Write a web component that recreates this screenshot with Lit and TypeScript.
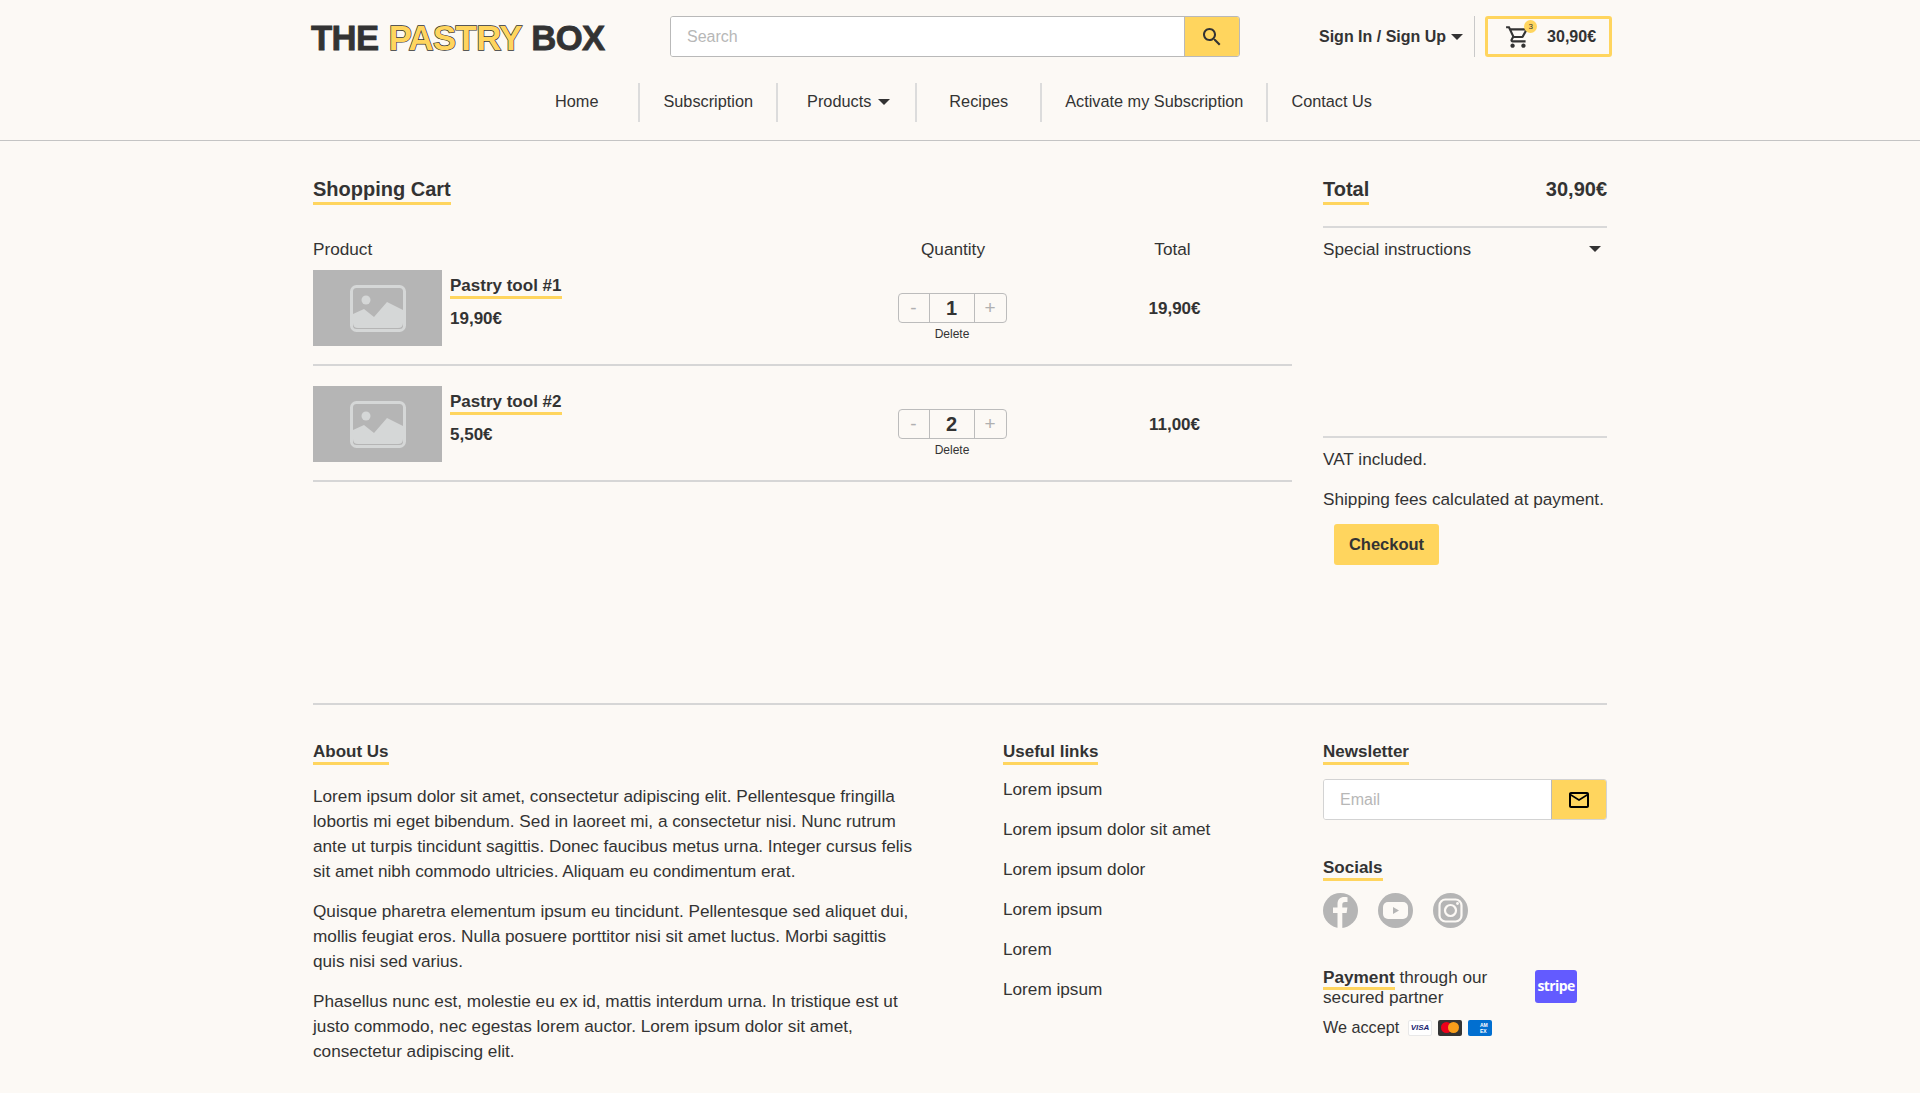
//
// the pastry box - shopping cart
//

import { LitElement, html, css, svg } from 'lit'
import { customElement } from 'lit/decorators.js'

const cartItems = [
  { name: 'Pastry tool #1', price: '19,90€', qty: 1, total: '19,90€' },
  { name: 'Pastry tool #2', price: '5,50€', qty: 2, total: '11,00€' }
]

const navLinks = ['Home', 'Subscription', 'Products', 'Recipes', 'Activate my Subscription', 'Contact Us']

const usefulLinks = ['Lorem ipsum', 'Lorem ipsum dolor sit amet', 'Lorem ipsum dolor', 'Lorem ipsum', 'Lorem', 'Lorem ipsum']

const placeholderIcon = svg`
  <svg class="ph" viewBox="0 0 56 47">
    <rect x="1.5" y="1.5" width="53" height="44" rx="5" fill="none" stroke="#d5d7d7" stroke-width="3"/>
    <circle cx="16" cy="15" r="4.5" fill="#d5d7d7"/>
    <path d="M3 29 L14 24 L24 32 L37 17 L53 25 V38 Q53 43 48 43 H8 Q3 43 3 38 Z" fill="#d5d7d7"/>
  </svg>`

@customElement('app-root')

export class AppRoot extends LitElement {

  static styles = css`
    :host {
      display: block;
      min-height: 1093px;
      background: #fcf9f5;
      color: #333;
      font-family: "Liberation Sans", Arial, sans-serif;
      font-size: 17.2px;
    }

    * { box-sizing: border-box; }

    .head {
      height: 141px;
      border-bottom: 1px solid #c4c4c4;
      padding-top: 16px;
    }

    .top {
      display: flex;
      align-items: center;
      height: 41px;
      padding-left: 311px;
    }

    .logo {
      width: 359px;
      padding-top: 3px;
      font-size: 34.7px;
      font-weight: 700;
      letter-spacing: -0.6px;
      word-spacing: 1px;
      color: #333;
      -webkit-text-stroke: 0.8px #333;
      white-space: nowrap;
    }

    .logo span {
      color: #ffd55e;
      paint-order: stroke fill;
      -webkit-text-stroke: 1.4px #333;
    }

    .search {
      display: flex;
      width: 570px;
      height: 41px;
      border: 1px solid #b9b9b9;
      border-radius: 3px;
      overflow: hidden;
    }

    .search input, .mail input {
      flex: 1;
      min-width: 0;
      border: none;
      outline: none;
      background: #fff;
      padding: 0 0 0 16px;
      font: inherit;
      font-size: 16px;
      color: #333;
    }

    input::placeholder { color: #b7b7b7; opacity: 1; }

    .search button, .mail button {
      display: flex;
      align-items: center;
      justify-content: center;
      border: none;
      padding: 0;
      background: #ffd55e;
      border-left: 1px solid #b9b9b9;
    }

    .search button { width: 55px; }

    .search svg { width: 24px; height: 24px; fill: #333; }

    .sign {
      display: flex;
      align-items: center;
      gap: 5px;
      margin-left: 79px;
      font-weight: 700;
      font-size: 16px;
      white-space: nowrap;
    }

    .caret {
      width: 0;
      height: 0;
      border-left: 6px solid transparent;
      border-right: 6px solid transparent;
      border-top: 6px solid #333;
    }

    .top-sep {
      width: 1px;
      height: 41px;
      margin: 0 10px 0 11px;
      background: #c9c9c9;
    }

    .cart {
      display: flex;
      align-items: center;
      width: 127px;
      height: 41px;
      padding-left: 17px;
      border: 3px solid #ffd55e;
      border-radius: 3px;
      font-weight: 700;
      font-size: 16px;
    }

    .cart-icon {
      position: relative;
      width: 26px;
      height: 26px;
      margin-right: 16px;
    }

    .cart-icon svg { width: 26px; height: 26px; fill: #333; }

    .badge {
      position: absolute;
      top: -4px;
      right: -6px;
      width: 13px;
      height: 13px;
      border-radius: 50%;
      background: #ffd55e;
      font-size: 8px;
      font-weight: 400;
      line-height: 13px;
      text-align: center;
    }

    nav {
      display: flex;
      height: 39px;
      margin-top: 26px;
      padding-left: 555px;
    }

    nav a {
      display: flex;
      align-items: center;
      gap: 7px;
      padding: 0 23px 2px 23px;
      border-left: 2px solid #dcdcdc;
      white-space: nowrap;
      font-size: 16.3px;
    }

    nav a:first-child {
      border-left: none;
      padding-left: 0;
      padding-right: 40px;
    }

    nav a:nth-child(3) {
      padding-left: 29px;
      padding-right: 25px;
    }

    nav a:nth-child(4) {
      padding-left: 32px;
      padding-right: 32px;
    }

    .wrap {
      display: grid;
      grid-template-columns: 979px 284px;
      column-gap: 31px;
      margin-left: 313px;
      width: 1294px;
      padding-top: 36px;
      height: 562px;
    }

    h2, h3 {
      margin: 0;
      font-weight: 700;
      display: inline-block;
      border-bottom: 3px solid #ffd55e;
    }

    h2 {
      font-size: 20px;
      line-height: 25px;
    }

    h3 {
      font-size: 17px;
      line-height: 20px;
    }

    .line {
      display: grid;
      grid-template-columns: 540px 200px 239px;
      align-items: center;
    }

    .labels {
      height: 24px;
      margin-top: 32px;
      margin-bottom: 9px;
    }

    .labels div:not(:first-child) { text-align: center; }

    .row {
      height: 96px;
      padding-bottom: 18px;
      border-bottom: 2px solid #d6d6d6;
    }

    .row + .row {
      padding-top: 20px;
      height: 116px;
    }

    .prod {
      display: flex;
      gap: 8px;
      height: 76px;
    }

    .thumb {
      display: flex;
      align-items: center;
      justify-content: center;
      width: 129px;
      height: 76px;
      background: #b5b5b5;
    }

    .ph { width: 56px; height: 47px; }

    .prod-name {
      display: inline-block;
      margin-top: 6px;
      font-weight: 700;
      font-size: 17px;
      line-height: 20px;
      border-bottom: 3px solid #ffd55e;
    }

    .prod-price {
      margin-top: 10px;
      font-weight: 700;
      font-size: 17px;
    }

    .qty-cell {
      display: flex;
      flex-direction: column;
      align-items: center;
      align-self: start;
      padding: 23px 2px 0 0;
    }

    .qty {
      display: grid;
      grid-template-columns: 30px 46px 31px;
      width: 109px;
      height: 30px;
      border: 1px solid #bcbcbc;
      border-radius: 4px;
      text-align: center;
      line-height: 28px;
    }

    .qty span { color: #b0b0b0; font-size: 19px; }

    .qty b {
      font-size: 20px;
      border-left: 1px solid #bcbcbc;
      border-right: 1px solid #bcbcbc;
    }

    .del {
      margin-top: 4px;
      font-size: 12px;
      line-height: 14px;
    }

    .row-total {
      text-align: center;
      padding: 2px 0 0 4px;
      font-weight: 700;
      font-size: 17px;
    }

    .side-head {
      display: flex;
      justify-content: space-between;
      align-items: flex-start;
    }

    .side-head strong {
      font-size: 20px;
      line-height: 25px;
    }

    .special {
      display: flex;
      justify-content: space-between;
      align-items: flex-start;
      height: 212px;
      margin-top: 21px;
      padding: 11px 6px 0 0;
      border-top: 2px solid #d9d9d9;
      border-bottom: 2px solid #d9d9d9;
    }

    .special .caret { margin-top: 7px; }

    .note {
      margin: 11px 0 0;
      line-height: 20px;
      white-space: nowrap;
    }

    .note + .note { margin-top: 20px; }

    .checkout {
      display: block;
      width: 105px;
      height: 41px;
      margin: 15px 0 0 11px;
      border: none;
      border-radius: 3px;
      background: #ffd55e;
      color: #333;
      font: inherit;
      font-size: 16.5px;
      font-weight: 700;
    }

    footer {
      display: grid;
      grid-template-columns: 690px 320px 284px;
      margin-left: 313px;
      width: 1294px;
      padding-top: 36px;
      border-top: 2px solid #d6d6d6;
    }

    .about p {
      width: 600px;
      margin: 0;
      line-height: 25px;
      padding-top: 15px;
    }

    .about p:first-of-type { padding-top: 19px; }

    .links {
      list-style: none;
      margin: 0;
      padding: 12px 0 0;
    }

    .links li {
      line-height: 25px;
      margin-bottom: 15px;
    }

    .mail {
      display: flex;
      height: 41px;
      margin-top: 14px;
      border: 1px solid #d3d3d3;
      border-radius: 3px;
      overflow: hidden;
    }

    .mail button { width: 55px; }

    .mail svg { width: 24px; height: 24px; fill: #000; }

    .socials-title { margin-top: 37px; }

    .socials {
      display: flex;
      gap: 20px;
      margin-top: 12px;
    }

    .socials svg { width: 35px; height: 35px; display: block; }

    .pay {
      display: flex;
      justify-content: space-between;
      margin-top: 39px;
      padding-right: 30px;
    }

    .pay p {
      margin: 0;
      line-height: 20px;
    }

    .pay b { border-bottom: 3px solid #ffd55e; }

    .stripe {
      width: 42px;
      height: 33px;
      margin-top: 3px;
      border-radius: 3px;
      background: #635bff;
      color: #fff;
      font-family: "Open Sans", sans-serif;
      font-weight: 700;
      font-size: 14px;
      letter-spacing: -0.6px;
      line-height: 31px;
      text-align: center;
    }

    .accept {
      display: flex;
      align-items: center;
      gap: 6px;
      margin-top: 11px;
      font-size: 16.2px;
    }

    .accept span { width: 79px; }

    .card {
      width: 24px;
      height: 16px;
      border-radius: 2px;
    }

    .visa {
      background: #fff;
      border: 1px solid #e8e8e8;
      color: #1a1f71;
      font-size: 8px;
      font-weight: 700;
      font-style: italic;
      line-height: 14px;
      text-align: center;
    }

    .mc {
      display: flex;
      align-items: center;
      justify-content: center;
      background: #333;
    }

    .mc i {
      width: 11px;
      height: 11px;
      border-radius: 50%;
      background: #eb001b;
    }

    .mc i + i {
      margin-left: -4px;
      background: #f79e1b;
    }

    .amex {
      background: #016fd0;
      color: #fff;
      font-size: 5px;
      font-weight: 700;
      line-height: 6px;
      padding: 2px 0 0 12px;
    }
  `

  private renderRow(item: typeof cartItems[0]) {
    return html`
      <div class="line row">
        <div class="prod">
          <div class="thumb">${placeholderIcon}</div>
          <div>
            <div class="prod-name">${item.name}</div>
            <div class="prod-price">${item.price}</div>
          </div>
        </div>
        <div class="qty-cell">
          <div class="qty"><span>-</span><b>${item.qty}</b><span>+</span></div>
          <div class="del">Delete</div>
        </div>
        <div class="row-total">${item.total}</div>
      </div>
    `
  }

  protected render() {
    return html`
      <div class="head">
        <div class="top">
          <div class="logo">THE <span>PASTRY</span> BOX</div>
          <div class="search">
            <input placeholder="Search">
            <button><svg viewBox="0 0 24 24"><path d="M15.5 14h-.79l-.28-.27C15.41 12.59 16 11.11 16 9.5 16 5.91 13.09 3 9.5 3S3 5.91 3 9.5 5.91 16 9.5 16c1.61 0 3.09-.59 4.23-1.57l.27.28v.79l5 4.99L20.49 19l-4.99-5zm-6 0C7.01 14 5 11.99 5 9.5S7.01 5 9.5 5 14 7.01 14 9.5 11.99 14 9.5 14z"/></svg></button>
          </div>
          <div class="sign">Sign In / Sign Up <i class="caret"></i></div>
          <div class="top-sep"></div>
          <div class="cart">
            <div class="cart-icon">
              <svg viewBox="0 0 24 24"><path d="M15.55 13c.75 0 1.41-.41 1.75-1.03l3.58-6.49c.37-.66-.11-1.48-.87-1.48H5.21l-.94-2H1v2h2l3.6 7.59-1.35 2.44C4.52 15.37 5.48 17 7 17h12v-2H7l1.1-2h7.45zM6.16 6h12.15l-2.76 5H8.53L6.16 6zM7 18c-1.1 0-1.99.9-1.99 2S5.9 22 7 22s2-.9 2-2-.9-2-2-2zm10 0c-1.1 0-1.99.9-1.99 2s.89 2 1.99 2 2-.9 2-2-.9-2-2-2z"/></svg>
              <div class="badge">3</div>
            </div>
            30,90€
          </div>
        </div>
        <nav>
          ${navLinks.map(link => html`
            <a>${link}${link === 'Products' ? html`<i class="caret"></i>` : ''}</a>
          `)}
        </nav>
      </div>

      <div class="wrap">
        <div>
          <h2>Shopping Cart</h2>
          <div class="line labels">
            <div>Product</div>
            <div>Quantity</div>
            <div>Total</div>
          </div>
          ${cartItems.map(item => this.renderRow(item))}
        </div>
        <div>
          <div class="side-head">
            <h2>Total</h2>
            <strong>30,90€</strong>
          </div>
          <div class="special">Special instructions <i class="caret"></i></div>
          <p class="note">VAT included.</p>
          <p class="note">Shipping fees calculated at payment.</p>
          <button class="checkout">Checkout</button>
        </div>
      </div>

      <footer>
        <div class="about">
          <h3>About Us</h3>
          <p>Lorem ipsum dolor sit amet, consectetur adipiscing elit. Pellentesque fringilla lobortis mi eget bibendum. Sed in laoreet mi, a consectetur nisi. Nunc rutrum ante ut turpis tincidunt sagittis. Donec faucibus metus urna. Integer cursus felis sit amet nibh commodo ultricies. Aliquam eu condimentum erat.</p>
          <p>Quisque pharetra elementum ipsum eu tincidunt. Pellentesque sed aliquet dui, mollis feugiat eros. Nulla posuere porttitor nisi sit amet luctus. Morbi sagittis quis nisi sed varius.</p>
          <p>Phasellus nunc est, molestie eu ex id, mattis interdum urna. In tristique est ut justo commodo, nec egestas lorem auctor. Lorem ipsum dolor sit amet, consectetur adipiscing elit.</p>
        </div>
        <div>
          <h3>Useful links</h3>
          <ul class="links">
            ${usefulLinks.map(link => html`<li>${link}</li>`)}
          </ul>
        </div>
        <div>
          <h3>Newsletter</h3>
          <div class="mail">
            <input placeholder="Email">
            <button><svg viewBox="0 0 24 24"><path d="M22 6c0-1.100-.9-2-2-2H4c-1.100 0-2 .9-2 2v12c0 1.100.9 2 2 2h16c1.100 0 2-.9 2-2V6zm-2 0l-8 5-8-5h16zm0 12H4V8l8 5 8-5v10z"/></svg></button>
          </div>
          <div class="socials-title"><h3>Socials</h3></div>
          <div class="socials">
            <svg viewBox="0 0 35 35">
              <circle cx="17.500" cy="17.500" r="17.500" fill="#b5b5b5"/>
              <path d="M14.500 35V20H10v-5.500h4.500V11c0-4.500 2.700-7 6.800-7 1.300 0 2.700.2 3.200.3v4.700h-2.400c-2.200 0-2.800 1.300-2.800 2.700v2.800h5.100l-.8 5.500h-4.300v15z" fill="#fcf9f5"/>
            </svg>
            <svg viewBox="0 0 35 35">
              <circle cx="17.500" cy="17.500" r="17.500" fill="#b5b5b5"/>
              <rect x="5" y="9" width="25" height="17" rx="5" fill="#fcf9f5"/>
              <path d="M15 14l6 3.500-6 3.500z" fill="#b5b5b5"/>
            </svg>
            <svg viewBox="0 0 35 35">
              <circle cx="17.500" cy="17.500" r="17.500" fill="#b5b5b5"/>
              <rect x="6.500" y="6.500" width="22" height="22" rx="6" fill="none" stroke="#fcf9f5" stroke-width="2.200"/>
              <circle cx="17.500" cy="17.500" r="5.500" fill="none" stroke="#fcf9f5" stroke-width="2.200"/>
              <circle cx="24.500" cy="10.500" r="1.400" fill="#fcf9f5"/>
            </svg>
          </div>
          <div class="pay">
            <p><b>Payment</b> through our<br>secured partner</p>
            <div class="stripe">stripe</div>
          </div>
          <div class="accept">
            <span>We accept</span>
            <div class="card visa">VISA</div>
            <div class="card mc"><i></i><i></i></div>
            <div class="card amex">AM<br>EX</div>
          </div>
        </div>
      </footer>
    `
  }

}
